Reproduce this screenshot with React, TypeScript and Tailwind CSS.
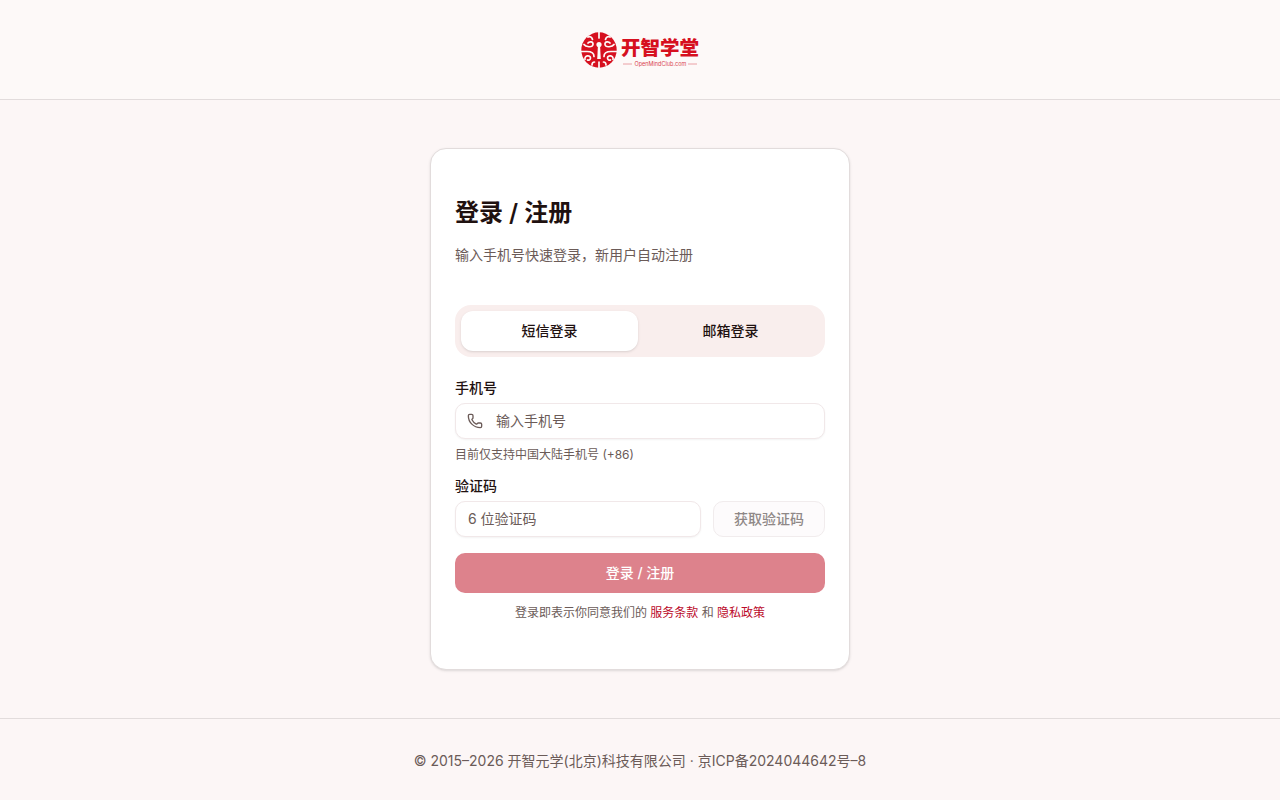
import { Phone } from 'lucide-react'

function Logo() {
  return (
    <svg viewBox="0 0 120 36" className="h-9 w-30" role="img" aria-label="开智学堂">
      <circle cx="19" cy="18" r="17.7" fill="#d6101f" />
      <g fill="none" stroke="#fdf9f8" strokeWidth="1.7" strokeLinecap="round">
        <path d="M19 0v6M19 30v6" />
        <path d="M8 5c2-1 4 0 4.500 2.500" />
        <path d="M4 12.500c1.500 2.500 8.500 3.500 9 0s-4-3-5-1.500" />
        <path d="M1 19.500h6c5 0 7 2 7 5" />
        <path d="M5 27.500c-1-4 5.500-5 5.500-1.500 0 2-2 2.500-3 2" />
        <path d="M12 33c0-2 1-3 2.500-3" />
        <path d="M30 5c-2-1-4 0-4.500 2.500" />
        <path d="M34 12.500c-1.500 2.500-8.500 3.500-9 0s4-3 5-1.500" />
        <path d="M37 19.500h-6c-5 0-7 2-7 5" />
        <path d="M33 27.500c1-4-5.500-5-5.500-1.500 0 2 2 2.500 3 2" />
        <path d="M26 33c0-2-1-3-2.500-3" />
      </g>
      <circle cx="19" cy="12.500" r="2.600" fill="#fdf9f8" />
      <path d="M18 13h2l.8 14h-3.600z" fill="#fdf9f8" />
      <text x="41" y="22.500" fontSize="19.500" fontWeight="900" fill="#d6101f" fontFamily="'Noto Sans CJK SC', sans-serif">
        开智学堂
      </text>
      <path d="M43 32h9M108 32h9" stroke="#e58a90" strokeWidth=".8" />
      <text x="54.500" y="33.500" fontSize="5.500" fill="#d94450" fontFamily="Inter, sans-serif">
        OpenMindClub.com
      </text>
    </svg>
  )
}

export default function App() {
  return (
    <div className="flex min-h-screen flex-col bg-[#fcf6f6] font-[Inter,'Noto_Sans_CJK_SC',sans-serif] text-sm text-[#1f1110]">
      <header className="flex justify-center border-b border-[#e2dcdc] bg-[#fdf9f8] pt-8 pb-[31px]">
        <a href="/">
          <Logo />
        </a>
      </header>

      <main className="flex flex-1 items-center justify-center px-4 py-12">
        <section className="w-full max-w-[420px] rounded-2xl border border-[#e2dcdc] bg-white px-6 py-12 shadow-sm">
          <h1 className="text-2xl leading-8 font-semibold">登录 / 注册</h1>
          <p className="mt-4 text-[#6b5b58]">输入手机号快速登录，新用户自动注册</p>

          <div role="tablist" className="mt-10 grid grid-cols-2 gap-1 rounded-2xl bg-[#f9eeed] p-1.5">
            <button type="button" role="tab" aria-selected="true" className="h-10 rounded-xl bg-white font-medium shadow-sm">
              短信登录
            </button>
            <button type="button" role="tab" aria-selected="false" className="h-10 rounded-xl font-medium">
              邮箱登录
            </button>
          </div>

          <form className="mt-6">
            <label htmlFor="phone" className="block leading-[14px] font-medium">
              手机号
            </label>
            <div className="relative mt-2">
              <Phone className="pointer-events-none absolute top-1/2 left-3 size-4 -translate-y-1/2 text-[#6b5b58]" />
              <input
                id="phone"
                type="tel"
                placeholder="输入手机号"
                className="block h-9 w-full rounded-[10px] border border-[#f1e8e9] bg-white pr-3 pb-0.5 pl-10 shadow-xs placeholder:text-[#6b5b58]"
              />
            </div>
            <p className="mt-2 text-xs text-[#6b5b58]">目前仅支持中国大陆手机号 (+86)</p>

            <label htmlFor="code" className="mt-4 block leading-[14px] font-medium">
              验证码
            </label>
            <div className="mt-2 flex gap-3">
              <input
                id="code"
                type="text"
                placeholder="6 位验证码"
                className="h-9 min-w-0 flex-1 rounded-[10px] border border-[#f1e8e9] bg-white px-3 pb-0.5 shadow-xs placeholder:text-[#6b5b58]"
              />
              <button
                type="button"
                disabled
                className="h-9 w-28 rounded-[10px] border border-[#f1eced] bg-[#fdfbfc] font-medium text-[#8f8887]"
              >
                获取验证码
              </button>
            </div>

            <button type="submit" disabled className="mt-4 h-10 w-full rounded-[10px] bg-[#dd828c] font-medium text-white">
              登录 / 注册
            </button>
          </form>

          <p className="mt-3 text-center text-xs text-[#6b5b58]">
            登录即表示你同意我们的{' '}
            <a href="/terms" className="text-[#bb0a2a]">
              服务条款
            </a>{' '}
            和{' '}
            <a href="/privacy" className="text-[#bb0a2a]">
              隐私政策
            </a>
          </p>
        </section>
      </main>

      <footer className="border-t border-[#e2dcdc] px-4 pt-8 pb-[29px] text-center text-[#6b5b58]">
        © 2015–2026 开智元学(北京)科技有限公司 · 京ICP备2024044642号–8
      </footer>
    </div>
  )
}
